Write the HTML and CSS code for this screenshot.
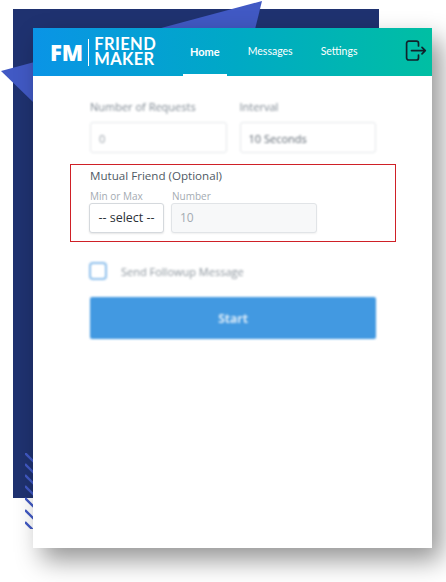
FILE: index.html
```
<!DOCTYPE html>
<html>
<head>
  <meta charset="UTF-8">
  <link rel="stylesheet" href="styles.css">
</head>
<body>
  <div class="backdrop"></div>
  <svg class="shard" width="270" height="110" viewBox="0 0 270 110">
    <polygon points="1,71 262,1 240,90 33,102" fill="#4159c4"></polygon>
  </svg>
  <svg class="stripes" width="20" height="76" viewBox="0 0 20 76">
    <g stroke="#4159c4" stroke-width="2.4" fill="none">
      <path d="M0 0l12 12"></path>
      <path d="M0 11l12 12"></path>
      <path d="M0 22l12 12"></path>
      <path d="M0 33l12 12"></path>
      <path d="M0 45l12 12"></path>
      <path d="M0 57l12 12"></path>
      <path d="M0 69l8 8"></path>
    </g>
  </svg>

  <div class="card">
    <div class="header">
      <div class="logo">
        <span class="logo-fm">FM</span>
        <span class="logo-name">
          <span class="logo-line">FRIEND</span>
          <span class="logo-line">MAKER</span>
        </span>
      </div>
      <div class="nav">
        <a class="nav-item active">Home</a>
        <a class="nav-item">Messages</a>
        <a class="nav-item">Settings</a>
      </div>
      <svg class="logout" width="22" height="22" viewBox="0 0 22 22" fill="none" stroke="#10222c" stroke-width="1.7" stroke-linecap="round" stroke-linejoin="round">
        <path d="M13.500 6V3.200A2 2 0 0 0 11.500 1.200H3.600A2 2 0 0 0 1.600 3.200V18A2 2 0 0 0 3.600 20H11.500A2 2 0 0 0 13.500 18V15"></path>
        <path d="M6.500 10.600H20.300M17 7.300l3.300 3.300L17 13.900"></path>
      </svg>
    </div>

    <div class="form">
      <div class="row blurred">
        <div class="field">
          <label>Number of Requests</label>
          <div class="input">0</div>
        </div>
        <div class="field">
          <label>Interval</label>
          <div class="input dark">10 Seconds</div>
        </div>
      </div>

      <div class="mutual">
        <div class="mutual-title">Mutual Friend (Optional)</div>
        <div class="mutual-row">
          <div class="mini-field">
            <label>Min or Max</label>
            <div class="select-box">-- select --</div>
          </div>
          <div class="mini-field">
            <label>Number</label>
            <div class="number-box">10</div>
          </div>
        </div>
      </div>

      <div class="followup blurred">
        <span class="checkbox"></span>
        <span class="followup-text">Send Followup Message</span>
      </div>

      <button class="start">Start</button>
    </div>
  </div>
</body>
</html>
```

FILE: styles.css
```
html, body {
  margin: 0;
  height: 582px;
  overflow: hidden;
  background: white;
}

body {
  position: relative;
  font-family: "Open Sans", "Noto Sans", sans-serif;
  color: #4a5560;
}

.backdrop {
  position: absolute;
  left: 13px;
  top: 9px;
  width: 366px;
  height: 489px;
  background: #1f3270;
}

.shard {
  position: absolute;
  left: 0;
  top: 0;
  filter: blur(0.4px);
}

.stripes {
  position: absolute;
  left: 25px;
  top: 453px;
}

.card {
  position: absolute;
  left: 33px;
  top: 28px;
  width: 399px;
  height: 520px;
  background: white;
  box-shadow: 9px 12px 24px rgba(0,0,0,0.42);
}

.header {
  display: flex;
  align-items: center;
  height: 48px;
  padding: 0 5px 0 17px;
  background: linear-gradient(90deg, #0a94e6 0%, #00a9c6 50%, #00bfa3 100%);
}

.logo {
  display: flex;
  align-items: center;
  width: 133px;
  color: white;
}

.logo-fm {
  font-family: "Open Sans", sans-serif;
  font-size: 22px;
  font-weight: 800;
  line-height: 27px;
  padding-right: 5px;
  border-right: 1px solid white;
}

.logo-name {
  display: flex;
  flex-direction: column;
  font-family: "Lato", sans-serif;
  font-size: 16.500px;
  font-weight: 700;
  letter-spacing: 0.4px;
  padding-left: 5px;
}

.logo-line {
  display: block;
  height: 15px;
  line-height: 15px;
}

.nav {
  display: flex;
  align-self: stretch;
  flex: 1;
}

.nav-item {
  display: flex;
  align-items: center;
  justify-content: center;
  box-sizing: border-box;
  height: 48px;
  padding: 0 7px 2px;
  margin-right: 14px;
  font-family: "Lato", sans-serif;
  font-size: 10.500px;
  color: white;
}

.nav-item.active {
  font-size: 11px;
  font-weight: 700;
  border-bottom: 2px solid white;
  padding-bottom: 0;
}

.logout {
  margin-top: -2px;
}

.form {
  padding: 23px 56px 0 57px;
}

.blurred {
  filter: blur(1.3px);
}

.row {
  display: flex;
  gap: 13px;
}

.field {
  width: 137px;
}

.field label {
  display: block;
  font-size: 11px;
  line-height: 15px;
  margin-bottom: 8px;
  color: #7c8690;
}

.input {
  box-sizing: border-box;
  height: 31px;
  padding: 0 8px;
  font-size: 11px;
  line-height: 31px;
  color: #9aa2aa;
  background: white;
  border: 1px solid #e3e6e9;
  border-radius: 3px;
}

.input.dark {
  color: #5c6670;
}

.mutual {
  box-sizing: border-box;
  width: 326px;
  height: 78px;
  margin: 11px 0 0 -20px;
  padding: 3px 18px 0 19px;
  border: 1px solid #cf2027;
}

.mutual-title {
  font-size: 11.600px;
  line-height: 15px;
  color: #4f5a64;
}

.mutual-row {
  display: flex;
  gap: 7px;
  margin: 7px 0 0 -1px;
}

.mini-field label {
  display: block;
  padding-left: 1px;
  font-size: 10px;
  line-height: 12px;
  margin-bottom: 1px;
  color: #a4abb2;
}

.select-box {
  box-sizing: border-box;
  width: 75px;
  height: 30px;
  font-size: 12.500px;
  line-height: 28px;
  text-align: center;
  color: #2b3138;
  background: white;
  border: 1px solid #d5d9dd;
  border-radius: 3px;
  box-shadow: 0 1px 2px rgba(0,0,0,0.1);
}

.number-box {
  box-sizing: border-box;
  width: 146px;
  height: 30px;
  padding: 0 8px;
  font-size: 12px;
  line-height: 28px;
  color: #a4abb2;
  background: #f7f8f9;
  border: 1px solid #e1e4e7;
  border-radius: 3px;
  box-shadow: 0 1px 2px rgba(0,0,0,0.06);
}

.followup {
  display: flex;
  align-items: center;
  gap: 14px;
  margin: 20px 0 0 -1px;
  height: 18px;
}

.checkbox {
  box-sizing: border-box;
  width: 18px;
  height: 18px;
  background: white;
  border: 2.500px solid #8fc0ec;
  border-radius: 4px;
}

.followup-text {
  font-size: 11px;
  color: #8a939b;
}

.start {
  display: block;
  width: 286px;
  height: 42px;
  margin-top: 17px;
  padding: 0;
  border: none;
  border-radius: 2px;
  font-family: inherit;
  font-size: 12px;
  font-weight: 700;
  color: #dcecf9;
  background: #4299e1;
  filter: blur(0.9px);
}
```
